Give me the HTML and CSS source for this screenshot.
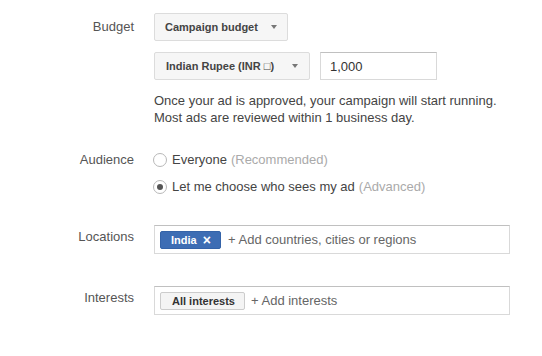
FILE: index.html
```html
<!DOCTYPE html>
<html lang="en">
  <head>
    <meta charset="UTF-8" />
    <title>Campaign settings</title>
    <link rel="stylesheet" href="styles.css">
  </head>
  <body>
    <div class="form">
      <div class="row">
        <div class="label">Budget</div>
        <div class="field">
          <div class="select campaign">Campaign budget<span class="caret"></span></div>
          <div class="money">
            <div class="select currency">Indian Rupee (INR □)<span class="caret"></span></div>
            <input class="amount" type="text" value="1,000" />
          </div>
          <p class="hint">
            Once your ad is approved, your campaign will start running.<br />
            Most ads are reviewed within 1 business day.
          </p>
        </div>
      </div>

      <div class="row audience">
        <div class="label">Audience</div>
        <div class="field">
          <div class="option"><span class="radio"></span>Everyone <span class="muted">(Recommended)</span></div>
          <div class="option"><span class="radio checked"></span>Let me choose who sees my ad <span class="muted">(Advanced)</span></div>
        </div>
      </div>

      <div class="row locations">
        <div class="label">Locations</div>
        <div class="field">
          <div class="tokens">
            <span class="chip blue">India <span class="x">×</span></span>
            <span class="add">+ Add countries, cities or regions</span>
          </div>
        </div>
      </div>

      <div class="row interests">
        <div class="label">Interests</div>
        <div class="field">
          <div class="tokens">
            <span class="chip grey">All interests</span>
            <span class="add">+ Add interests</span>
          </div>
        </div>
      </div>
    </div>
  </body>
</html>
```

FILE: styles.css
```css
body {
  margin: 0;
  font-family: "Liberation Sans", Arial, sans-serif;
  font-size: 13px;
  color: #444;
  background: #fff;
}
.form {
  padding-top: 13px;
}
.row {
  display: grid;
  grid-template-columns: 134px 356px;
  column-gap: 20px;
}
.label {
  text-align: right;
  color: #555;
  line-height: 17px;
  padding-top: 5px;
}

/* Budget */
.select {
  box-sizing: border-box;
  height: 28px;
  display: flex;
  align-items: center;
  justify-content: space-between;
  border: 1px solid #dcdcdc;
  border-radius: 2px;
  background: #f6f6f6;
  font-size: 11px;
  font-weight: bold;
  color: #444;
}
.campaign {
  width: 134px;
  padding: 0 10px;
}
.currency {
  width: 156px;
  padding: 0 11px;
}
.caret {
  width: 0;
  height: 0;
  border-top: 4px solid #777;
  border-left: 3.5px solid transparent;
  border-right: 3.5px solid transparent;
}
.money {
  display: flex;
  margin-top: 11px;
}
.amount {
  box-sizing: border-box;
  width: 117px;
  height: 28px;
  margin: 0 0 0 10px;
  padding: 0 9px;
  border: 1px solid #d9d9d9;
  border-top-color: #c0c0c0;
  font-family: inherit;
  font-size: 13px;
  color: #333;
}
.hint {
  margin: 12px 0 0;
  line-height: 17px;
}

/* Audience */
.audience {
  margin-top: 20px;
}
.option {
  display: flex;
  align-items: center;
  height: 27px;
  margin-left: -1px;
}
.radio {
  box-sizing: border-box;
  width: 14px;
  height: 14px;
  margin-right: 5px;
  border: 1px solid #b8b8b8;
  border-radius: 50%;
  background: #fff;
  display: flex;
  align-items: center;
  justify-content: center;
}
.radio.checked::after {
  content: "";
  width: 6px;
  height: 6px;
  border-radius: 50%;
  background: #555;
}
.muted {
  color: #aaa;
  margin-left: 4px;
}

/* Locations / interests */
.locations {
  margin-top: 25px;
}
.interests {
  margin-top: 32px;
}
.locations .label,
.interests .label {
  padding-top: 3px;
}
.tokens {
  box-sizing: border-box;
  height: 29px;
  display: flex;
  align-items: center;
  padding-left: 5px;
  border: 1px solid #d9d9d9;
  border-top-color: #c0c0c0;
}
.chip {
  box-sizing: border-box;
  height: 18px;
  display: flex;
  align-items: center;
  border-radius: 2px;
  font-size: 11px;
  font-weight: bold;
}
.chip.blue {
  width: 61px;
  padding: 0 0 0 10px;
  background: #3d6db4;
  border: 1px solid #3463a8;
  color: #fff;
}
.chip .x {
  margin-left: 6px;
  font-size: 14px;
  line-height: 1;
}
.chip.grey {
  width: 85px;
  padding-left: 11px;
  background: #f4f4f4;
  border: 1px solid #ccc;
  color: #333;
}
.add {
  margin-left: 7px;
  color: #666;
}
.interests .add {
  margin-left: 6px;
}
```
